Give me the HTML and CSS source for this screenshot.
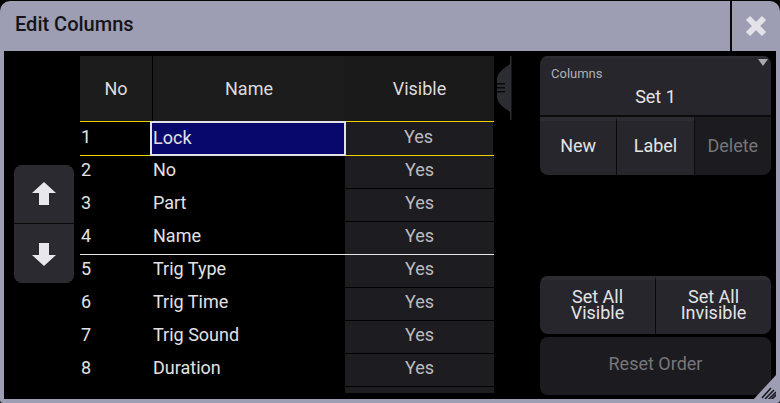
FILE: index.html
```html
<!DOCTYPE html>
<html lang="en">
<head>
    <meta charset="UTF-8">
    <meta name="viewport" content="width=device-width, initial-scale=1.0">
    <title>Edit Columns</title>
    <link rel="stylesheet" href="styles.css">
</head>
<body>
    <div class="window">
        <div class="titlebar">
            <div class="title">Edit Columns</div>
            <div class="close">
                <svg width="24" height="24" viewBox="0 0 24 24">
                    <path d="M4 4 L20 20 M20 4 L4 20" stroke="#e2e2e8" stroke-width="6" stroke-linecap="butt"/>
                </svg>
            </div>
        </div>
        <div class="content">
            <div class="arrows">
                <div class="arrow-btn up">
                    <svg width="24" height="24" viewBox="0 0 24 24">
                        <path d="M12 0 L24 11 L17 11 L17 23 L7 23 L7 11 L0 11 Z" fill="#e8e8ec"/>
                    </svg>
                </div>
                <div class="arrow-btn down">
                    <svg width="24" height="24" viewBox="0 0 24 24">
                        <path d="M12 24 L24 13 L17 13 L17 1 L7 1 L7 13 L0 13 Z" fill="#e8e8ec"/>
                    </svg>
                </div>
            </div>

            <div class="table">
                <div class="thead">
                    <div class="th no">No</div>
                    <div class="th name">Name</div>
                    <div class="th vis">Visible</div>
                </div>
                <div class="row first">
                    <div class="td no">1</div>
                    <div class="td name selected">Lock</div>
                    <div class="td vis">Yes</div>
                </div>
                <div class="row">
                    <div class="td no">2</div>
                    <div class="td name">No</div>
                    <div class="td vis">Yes</div>
                </div>
                <div class="row">
                    <div class="td no">3</div>
                    <div class="td name">Part</div>
                    <div class="td vis">Yes</div>
                </div>
                <div class="row mark">
                    <div class="td no">4</div>
                    <div class="td name">Name</div>
                    <div class="td vis">Yes</div>
                </div>
                <div class="row">
                    <div class="td no">5</div>
                    <div class="td name">Trig Type</div>
                    <div class="td vis">Yes</div>
                </div>
                <div class="row">
                    <div class="td no">6</div>
                    <div class="td name">Trig Time</div>
                    <div class="td vis">Yes</div>
                </div>
                <div class="row">
                    <div class="td no">7</div>
                    <div class="td name">Trig Sound</div>
                    <div class="td vis">Yes</div>
                </div>
                <div class="row">
                    <div class="td no">8</div>
                    <div class="td name">Duration</div>
                    <div class="td vis">Yes</div>
                </div>
                <div class="row">
                    <div class="td no"></div>
                    <div class="td name"></div>
                    <div class="td vis"></div>
                </div>
            </div>

            <div class="scroll">
                <svg width="18" height="64" viewBox="0 0 18 64">
                    <path d="M17 0 L17 64 L16 64 L16 58 C16 54 12 54 8 50 C4 46 3 44 3 40 L3 24 C3 20 4 18 8 14 C12 10 16 10 16 6 L16 0 Z" fill="#2c2c33"/>
                    <rect x="16" y="0" width="1.5" height="64" fill="#2c2c33"/>
                    <rect x="3" y="27" width="8" height="1.5" fill="#0a0a0c"/>
                    <rect x="3" y="31" width="8" height="1.5" fill="#0a0a0c"/>
                    <rect x="3" y="35" width="8" height="1.5" fill="#0a0a0c"/>
                </svg>
            </div>

            <div class="side">
                <div class="group">
                    <div class="select">
                        <div class="select-label">Columns</div>
                        <div class="select-value">Set 1</div>
                        <div class="select-caret"></div>
                    </div>
                    <div class="btn-row">
                        <div class="btn">New</div>
                        <div class="btn">Label</div>
                        <div class="btn disabled">Delete</div>
                    </div>
                </div>

                <div class="spacer"></div>

                <div class="btn-row pair">
                    <div class="btn two">Set All<br>Visible</div>
                    <div class="btn two">Set All<br>Invisible</div>
                </div>
                <div class="btn wide disabled">Reset Order</div>
            </div>

            <svg class="grip" width="24" height="26" viewBox="0 0 24 26">
                <path d="M24 0 L24 26 L0 26 Z" fill="#9d9db3"/>
                <path d="M9 24 L18 14 M12 25 L21 16 M15 26 L23 18 M18 26 L24 20" stroke="#1a1a22" stroke-width="1.6"/>
            </svg>
        </div>
    </div>
</body>
</html>
```

FILE: styles.css
```css
body {
    margin: 0;
    padding: 0;
    background: #050505;
    font-family: Roboto, "Liberation Sans", sans-serif;
}
.window {
    width: 780px;
    height: 402px;
    margin-top: 1px;
    background: #9d9db3;
    border-radius: 10px 10px 3px 3px;
    display: flex;
    flex-direction: column;
    box-sizing: border-box;
}
.titlebar {
    height: 50px;
    display: flex;
    flex-shrink: 0;
}
.title {
    flex: 1;
    padding-left: 15px;
    line-height: 47px;
    font-size: 20px;
    font-weight: 500;
    color: #141418;
}
.close {
    width: 48px;
    border-left: 2px solid #0a0a0a;
    display: flex;
    align-items: center;
    justify-content: center;
}
.content {
    flex: 1;
    margin: 0 4px 4px;
    background: #000;
    display: flex;
    position: relative;
    padding-top: 5px;
    overflow: hidden;
}
.arrows {
    width: 60px;
    padding-left: 10px;
    margin-right: 6px;
    padding-top: 109px;
}
.arrow-btn {
    height: 58px;
    background: #2a2a30;
    display: flex;
    align-items: center;
    justify-content: center;
}
.arrow-btn.up {
    border-radius: 8px 8px 0 0;
    border-bottom: 1px solid #0a0a0a;
    height: 58px;
}
.arrow-btn.down {
    border-radius: 0 0 8px 8px;
    height: 59px;
}
.table {
    width: 414px;
    height: 337px;
    overflow: hidden;
    font-size: 18px;
    color: #e2e2e4;
}
.thead {
    display: flex;
    height: 65px;
}
.th {
    background: #1c1c1c;
    display: flex;
    align-items: center;
    justify-content: center;
    color: #dcdcde;
}
.th.no {
    width: 72px;
    border-right: 1px solid #000;
}
.th.name { width: 192px; }
.th.vis { width: 149px; background: #1a1a1a; }
.row {
    display: flex;
    height: 33px;
    box-sizing: border-box;
    border-bottom: 1px solid #000;
}
.row.first {
    height: 35px;
    border-top: 1px solid #f0d000;
    border-bottom: 1px solid #f0d000;
}
.row.mark {
    border-bottom: 1px solid #e8e8e8;
}
.td {
    display: flex;
    align-items: center;
    padding-bottom: 5px;
    box-sizing: border-box;
}
.td.no {
    width: 72px;
    padding-left: 1px;
}
.td.name {
    width: 193px;
    padding-left: 1px;
}
.td.vis {
    width: 149px;
    justify-content: center;
    background: #1d1c21;
    color: #bcbcc0;
}
.td.selected {
    position: relative;
    background: #08086c;
    outline: 2px solid #e2e2e6;
    outline-offset: -1px;
    margin-right: -1px;
    width: 194px;
    margin-left: -1px;
    padding-left: 2px;
    padding-bottom: 3px;
}
.scroll {
    width: 46px;
}
.scroll svg {
    display: block;
}
.side {
    width: 231px;
    display: flex;
    flex-direction: column;
    padding-bottom: 4px;
}
.group {
    border-radius: 8px;
    overflow: hidden;
}
.select {
    background: #27262c;
    border-top: 2px solid #2d2c33;
    box-sizing: border-box;
    position: relative;
    border-bottom: 2px solid #0c0c0e;
    height: 61px;
}
.select-label {
    font-size: 13px;
    color: #b0b0b4;
    padding: 8px 0 0 11px;
}
.select-value {
    text-align: center;
    font-size: 18px;
    color: #e4e4e6;
    margin-top: 5px;
}
.select-caret {
    position: absolute;
    right: 3px;
    top: 1px;
    border-left: 5px solid transparent;
    border-right: 5px solid transparent;
    border-top: 7px solid #a8a8b0;
}
.btn-row {
    display: flex;
    height: 58px;
}
.btn {
    flex: 1;
    background: #27262c;
    border-top: 4px solid #2d2c33;
    box-sizing: border-box;
    display: flex;
    align-items: center;
    justify-content: center;
    text-align: center;
    font-size: 18px;
    line-height: 18px;
    color: #e4e4e6;
    padding-bottom: 4px;
}
.btn.two {
    line-height: 16px;
    padding-bottom: 4px;
}
.btn + .btn {
    border-left: 1px solid #0a0a0a;
}
.btn.disabled {
    background: #1c1b1f;
    border-top-color: #1c1b1f;
    color: #76767a;
}
.spacer {
    flex: 1;
}
.pair {
    border-radius: 8px;
    overflow: hidden;
}
.wide {
    flex: none;
    height: 58px;
    margin-top: 3px;
    border-radius: 8px;
    padding-bottom: 8px;
}
.grip {
    position: absolute;
    right: -1px;
    bottom: -1px;
}
```
